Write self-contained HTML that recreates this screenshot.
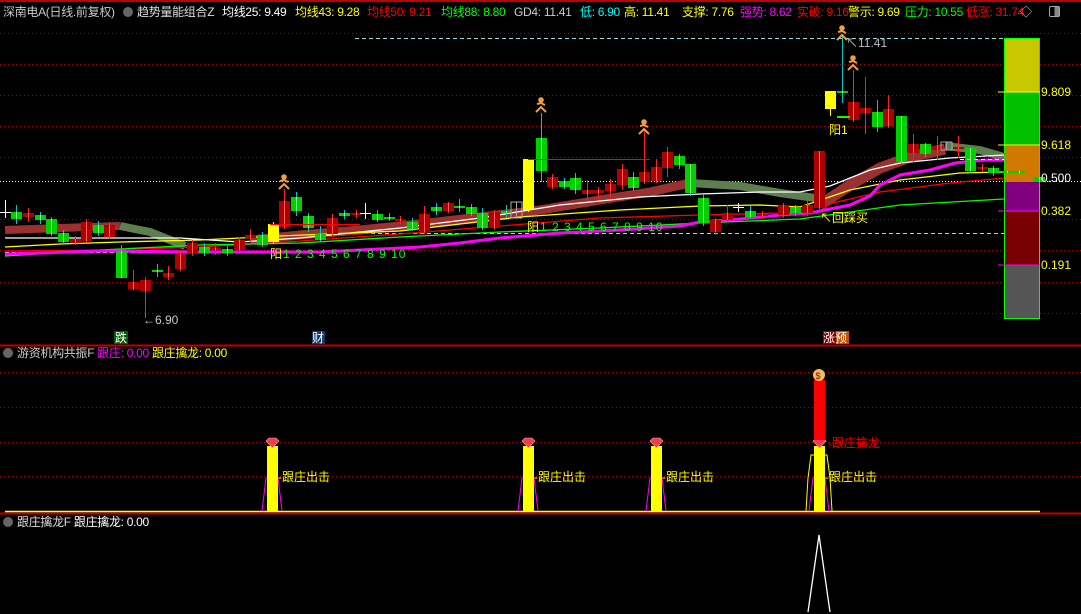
<!DOCTYPE html>
<html><head><meta charset="utf-8"><style>
html,body{margin:0;padding:0;background:#000;width:1081px;height:614px;overflow:hidden}
body{position:relative;font-family:"Liberation Sans","Noto Sans CJK SC",sans-serif;font-size:12px}
.t{position:absolute;white-space:nowrap;line-height:14px}
.h{letter-spacing:-0.3px}
svg{position:absolute;left:0;top:0}
</style></head><body>
<svg id="s" width="1081" height="614" xmlns="http://www.w3.org/2000/svg">
<g stroke="#a00000" stroke-dasharray="1,3" stroke-width="1">
<line x1="0" y1="33.5" x2="1081" y2="33.5"/><line x1="0" y1="64.5" x2="1081" y2="64.5"/><line x1="0" y1="95.5" x2="1081" y2="95.5"/><line x1="0" y1="126.5" x2="1081" y2="126.5"/><line x1="0" y1="157.5" x2="1081" y2="157.5"/><line x1="0" y1="219.5" x2="1081" y2="219.5"/><line x1="0" y1="250.5" x2="1081" y2="250.5"/><line x1="0" y1="282.5" x2="1081" y2="282.5"/><line x1="0" y1="313.5" x2="1081" y2="313.5"/>
<line x1="0" y1="372.5" x2="1081" y2="372.5"/><line x1="0" y1="407.5" x2="1081" y2="407.5"/><line x1="0" y1="442.5" x2="1081" y2="442.5"/><line x1="0" y1="476.5" x2="1081" y2="476.5"/>
</g>
<line x1="0" y1="1" x2="1081" y2="1" stroke="#c00000" stroke-width="2"/>
<line x1="0" y1="345.5" x2="1081" y2="345.5" stroke="#c00000" stroke-width="2"/>
<line x1="0" y1="513.5" x2="1081" y2="513.5" stroke="#c00000" stroke-width="2"/>
<line x1="0" y1="181.5" x2="1081" y2="181.5" stroke="#fff" stroke-dasharray="1,2"/>
<line x1="355" y1="38.5" x2="1004" y2="38.5" stroke="#8fe0e0" stroke-dasharray="4,3"/>
<line x1="280" y1="233.5" x2="1004" y2="233.5" stroke="#8fe0e0" stroke-dasharray="4,3"/>
<line x1="5" y1="252.5" x2="280" y2="252.5" stroke="#fff" stroke-dasharray="4,3"/>
<rect x="1004" y="38" width="36" height="54" fill="#c8c800"/>
<rect x="1004" y="92" width="36" height="54" fill="#00c000"/>
<rect x="1004" y="146" width="36" height="36" fill="#d07800"/>
<rect x="1004" y="182" width="36" height="30" fill="#800080"/>
<rect x="1004" y="212" width="36" height="53" fill="#780000"/>
<rect x="1004" y="265" width="36" height="53" fill="#555"/>
<rect x="1004.5" y="38.5" width="35" height="280" fill="none" stroke="#00ff00"/>
<line x1="998" y1="92" x2="1040" y2="92" stroke="#ff0"/><line x1="998" y1="145" x2="1040" y2="145" stroke="#ff0"/>
<line x1="998" y1="211" x2="1040" y2="211" stroke="#f0f"/><line x1="998" y1="265" x2="1040" y2="265" stroke="#f0f"/>
<g id="ma" fill="none"></g>
<g id="cd"></g>
<line x1="528" y1="159.5" x2="650" y2="159.5" stroke="#f00"/>
<line x1="270" y1="224.5" x2="360" y2="224.5" stroke="#f00"/>
<line x1="960" y1="159.5" x2="1004" y2="159.5" stroke="#fff" stroke-dasharray="4,3"/>
<line x1="837" y1="117" x2="850" y2="117" stroke="#0f0" stroke-width="2"/>
<g font-family="Liberation Sans,Noto Sans CJK SC,sans-serif" font-size="12">
<text x="270" y="258" fill="#ff0">阳</text><text x="283" y="258" fill="#0f0" letter-spacing="1">1 2 3 4 5 6 7 8 9 10</text>
<text x="527" y="231" fill="#ff0">阳</text><text x="540" y="231" fill="#0f0" letter-spacing="1">1 2 3 4 5 6 7 8 9 10</text>
<text x="829" y="134" fill="#ff0">阳1</text>
<text x="820" y="222" fill="#ff0">↖回踩买</text>
<text x="143" y="324" fill="#ccc">←6.90</text>
<text x="846" y="47" fill="#bbb">↖11.41</text>
<text x="1041" y="96" fill="#ff0">9.809</text><text x="1041" y="149" fill="#ff0">9.618</text>
<text x="1041" y="182" fill="#fff">0.500</text><text x="1041" y="215" fill="#ff0">0.382</text><text x="1041" y="269" fill="#ff0">0.191</text>
</g>
<rect x="114" y="331" width="14" height="13" fill="#006000"/><text x="115" y="342" fill="#fff" font-size="12" font-family="Noto Sans CJK SC">跌</text>
<rect x="312" y="331" width="13" height="13" fill="#103a70"/><text x="312" y="342" fill="#fff" font-size="12" font-family="Noto Sans CJK SC">财</text>
<rect x="823" y="331" width="13" height="13" fill="#8b0000"/><rect x="836" y="331" width="13" height="13" fill="#c05000"/>
<text x="823" y="342" fill="#fff" font-size="12" font-family="Noto Sans CJK SC">涨预</text>
<line x1="5" y1="511.5" x2="1040" y2="511.5" stroke="#ff0" stroke-width="1.5"/>
<g id="p2"></g>
<rect x="814" y="380" width="11" height="60" fill="#f00"/>
<circle cx="819" cy="375" r="6" fill="#e8c060"/><text x="815.5" y="379" font-size="9" fill="#a00">$</text>
<text x="828" y="447" fill="#f00" font-size="12" font-family="Liberation Sans,Noto Sans CJK SC">-跟庄擒龙</text>
<polyline points="808,612 819,535 830,612" fill="none" stroke="#fff" stroke-width="1.3"/>
</svg>
<div class="t h" style="left:3px;top:5px;color:#c8c8c8">深南电A(日线.前复权)</div>
<div class="t" style="left:123px;top:7px;width:10px;height:10px;border-radius:50%;background:#666"></div>
<div class="t h" style="left:137px;top:5px;color:#ddd">趋势量能组合Z</div>
<div class="t h" style="left:222px;top:5px;color:#fff">均线25: 9.49</div>
<div class="t h" style="left:295px;top:5px;color:#ff0">均线43: 9.28</div>
<div class="t h" style="left:367px;top:5px;color:#f00">均线50: 9.21</div>
<div class="t h" style="left:441px;top:5px;color:#0f0">均线88: 8.80</div>
<div class="t h" style="left:514px;top:5px;color:#ccc">GD4: 11.41</div>
<div class="t h" style="left:580px;top:5px;color:#0ff">低: 6.90</div>
<div class="t h" style="left:624px;top:5px;color:#ff0">高: 11.41</div>
<div class="t h" style="left:682px;top:5px;color:#ff0">支撑: 7.76</div>
<div class="t h" style="left:740px;top:5px;color:#f0f">强势: 8.62</div>
<div class="t h" style="left:797px;top:5px;color:#f00">实破: 9.16</div>
<div class="t h" style="left:848px;top:5px;color:#ff0">警示: 9.69</div>
<div class="t h" style="left:905px;top:5px;color:#0f0">压力: 10.55</div>
<div class="t h" style="left:966px;top:5px;color:#f00">低涨: 31.74</div>
<div class="t" style="left:1020px;top:5px;color:#ccc">◇</div>
<div class="t" style="left:1049px;top:6px;width:9px;height:9px;border:1px solid #aaa;border-radius:2px;background:linear-gradient(90deg,#000 50%,#888 50%)"></div>
<div class="t" style="left:3px;top:348px;width:10px;height:10px;border-radius:50%;background:#666"></div>
<div class="t h" style="left:17px;top:346px;color:#ccc">游资机构共振F <span style="color:#f0f">跟庄: 0.00</span> <span style="color:#ff0">跟庄擒龙: 0.00</span></div>
<div class="t" style="left:3px;top:517px;width:10px;height:10px;border-radius:50%;background:#666"></div>
<div class="t h" style="left:17px;top:515px;color:#ddd">跟庄擒龙F <span style="color:#fff">跟庄擒龙: 0.00</span></div>
<script>
var NS="http://www.w3.org/2000/svg";
function el(p,t,a){var e=document.createElementNS(NS,t);for(var k in a)e.setAttribute(k,a[k]);p.appendChild(e);return e;}
var ma=document.getElementById('ma');
function pl(pts,c,w,d){var a={points:pts,stroke:c,'stroke-width':w||1,fill:'none'};if(d)a['stroke-dasharray']=d;el(ma,'polyline',a);}
pl("5,230 60,228 120,226",'#9a3030',8);
pl("120,226 150,232 185,246",'#5e7e50',8);
pl("250,240 300,235 360,230 420,224 480,217 540,210 600,200 650,192 690,183",'#9a3030',9);
pl("690,183 740,186 780,193 815,198",'#5e7e50',8);
pl("820,205 850,185 880,168 910,157 945,149",'#9a3030',11);
pl("945,146 980,150 1004,157",'#5e7e50',8);
pl("5,238 100,238 180,238 240,242 300,238 400,228 480,218 560,205 640,197 700,194 760,192 800,192 830,186 870,170 900,163 950,158 1004,155",'#fff',1.3);
pl("5,247 60,244 120,242 200,240 280,236 400,231 520,217 620,210 700,206 760,205 800,207 850,190 900,180 960,173 1004,172",'#ff0',1.3);
pl("5,251 100,250 200,247 300,241 400,234 500,226 600,218 700,215 780,213 820,206 880,192 950,183 1004,178",'#f00',1.3);
pl("5,256 100,250 200,245 300,243 400,237 500,232 600,228 700,223 800,219 900,205 1004,199",'#0f0',1.3);
pl("5,254 40,253 100,251 200,252 320,252 360,250 420,247 460,243 500,238 560,233 620,230 680,226 700,222 740,219 780,215 810,213 850,205 870,196 880,185 900,175 930,170 955,163 985,160 1004,160",'#f0f',3);
var cd=document.getElementById('cd');
var C=[[5,212,212,200,218,'w'],[16,212,219,205,224,'g'],[28,213,217,208,222,'r'],[40,215,220,212,224,'g'],[51,219,234,217,236,'g'],[63,233,242,230,244,'g'],[75,239,243,236,245,'r'],[86,222,241,219,243,'r'],[98,225,233,221,236,'g'],[109,225,237,222,239,'r'],[121,251,278,245,278,'g'],[133,282,289,270,290,'r'],[145,280,291,277,318,'r'],[157,270,272,264,277,'g'],[168,273,277,266,280,'r'],[180,254,269,250,271,'r'],[192,243,253,240,256,'r'],[204,247,253,243,256,'g'],[215,248,250,243,255,'r'],[227,249,253,246,256,'g'],[239,240,250,237,252,'r'],[250,235,238,229,242,'r'],[262,235,245,232,247,'g'],[273,224,242,222,244,'y'],[284,201,227,189,229,'r'],[296,197,211,192,216,'g'],[308,216,228,213,232,'g'],[320,234,240,226,242,'g'],[332,218,234,214,236,'r'],[344,213,216,210,219,'g'],[356,213,215,210,218,'r'],
[365,213,213,203,219,'w'],[377,214,220,210,222,'g'],[389,217,219,213,221,'g'],[400,219,221,216,224,'r'],[412,222,229,218,231,'g'],[424,214,232,206,234,'r'],[436,207,211,203,215,'g'],[448,203,211,202,213,'r'],[459,206,208,199,212,'g'],[471,207,214,204,216,'g'],[482,213,228,208,230,'g'],[494,212,228,210,230,'r'],[506,211,213,205,218,'g'],[516,202,218,202,218,'o'],[528,159,210,159,212,'y'],[541,138,171,113,182,'g'],[552,177,187,174,189,'r'],[564,181,187,178,189,'g'],[575,178,190,173,194,'g'],[587,190,194,180,200,'r'],[598,190,193,187,199,'r'],[610,184,191,179,199,'r'],[622,169,185,164,190,'r'],[633,177,188,172,191,'g'],[644,172,182,130,184,'r'],[656,167,181,159,183,'r'],[667,152,168,147,177,'r'],[679,156,165,154,169,'g'],[690,164,193,164,196,'g'],[703,198,223,194,226,'g'],[715,220,232,218,235,'r'],[727,213,220,205,222,'r'],[738,207,207,203,212,'w'],[750,211,217,206,219,'g'],[762,214,216,211,219,'r'],
[783,205,215,203,218,'r'],[795,207,213,205,216,'g'],[807,205,213,201,216,'r'],[819,151,208,151,210,'r'],[830,91,109,91,116,'y'],[842,91,93,34,103,'g'],[853,102,120,70,122,'r'],[865,108,113,77,134,'r'],[877,112,127,100,132,'g'],[888,109,126,95,128,'r'],[901,116,162,116,164,'g'],[913,144,153,134,162,'r'],[925,144,154,143,157,'g'],[937,146,150,136,160,'r'],[946,142,150,142,150,'o'],[958,147,149,136,158,'r'],[970,148,171,148,173,'g'],[982,167,169,164,172,'r'],[993,168,173,166,176,'g'],[1007,171,173,168,180,'g'],[1019,171,173,167,178,'g'],[1039,177,182,176,183,'g']];
C.forEach(function(c){var x=c[0],t=c[1],b=c[2],h=c[3],l=c[4],k=c[5];
var col={r:'#ff2020',g:'#00e000',y:'#ffff00',w:'#fff',o:'#aaa'}[k];
el(cd,'line',{x1:x+.5,y1:h,x2:x+.5,y2:l,stroke:k=='g'?'#00c8c8':col});
if(k=='w'){el(cd,'line',{x1:x-5,y1:t+.5,x2:x+6,y2:t+.5,stroke:'#fff'});return;}
if(k=='o'){el(cd,'rect',{x:x-5,y:t,width:11,height:b-t,fill:'none',stroke:'#aaa'});return;}
var ht=Math.max(b-t,2);
el(cd,'rect',{x:x-5,y:t,width:11,height:ht,fill:{r:'#b00000',g:'#00d000',y:'#ffff00'}[k]});
if(k!='y')el(cd,'line',{x1:x+.5,y1:t,x2:x+.5,y2:t+ht,stroke:k=='r'?'#ff6060':'#80ff80'});
});
[[284,183],[541,106],[644,128],[842,34],[853,64]].forEach(function(p){
var g=el(cd,'g',{stroke:'#f0a040','stroke-width':2,fill:'none'});
el(g,'circle',{cx:p[0],cy:p[1]-6,r:1.8,fill:'#f0a040'});
el(g,'polyline',{points:(p[0]-4)+','+(p[1]-2)+' '+p[0]+','+(p[1]-3)+' '+(p[0]+4)+','+(p[1]-1)});
el(g,'polyline',{points:(p[0]-5)+','+(p[1]+6)+' '+p[0]+','+(p[1]+1)+' '+(p[0]+5)+','+(p[1]+6)});
});
var p2=document.getElementById('p2');
[272,528,656,819].forEach(function(x){
el(p2,'polyline',{points:(x-10)+',511 '+(x-6)+',478 '+(x+6)+',478 '+(x+10)+',511',stroke:'#f0f',fill:'none'});
el(p2,'rect',{x:x-5,y:446,width:11,height:65,fill:'#ff0'});
el(p2,'polygon',{points:(x-6)+',441 '+(x-3)+',438 '+(x+4)+',438 '+(x+7)+',441 '+(x+0.5)+',448',fill:'#e84050',stroke:'#ffa0a0','stroke-width':.6});
var t=el(p2,'text',{x:x+6,y:481,fill:'#ff0','font-size':12,'font-family':'Liberation Sans,Noto Sans CJK SC,sans-serif'});t.textContent='-跟庄出击';
});
el(p2,'polyline',{points:'806,511 808,478 811,455 827,455 830,478 832,511',stroke:'#ff0',fill:'none'});
</script>
</body></html>
